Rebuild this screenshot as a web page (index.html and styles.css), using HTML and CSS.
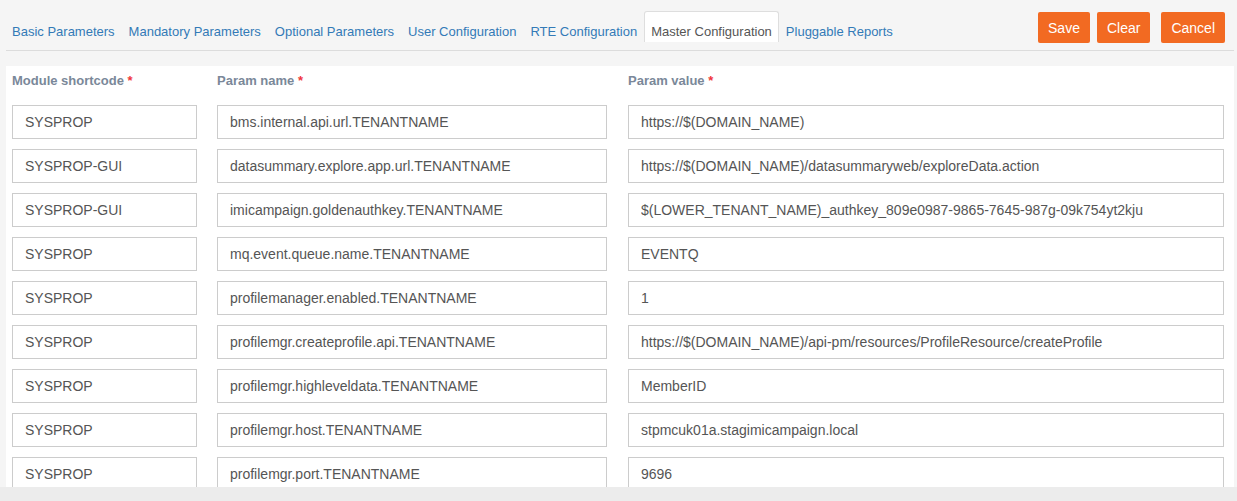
FILE: index.html
```html
<!DOCTYPE html>
<html>
<head>
<meta charset="utf-8">
<link rel="stylesheet" href="styles.css">
</head>
<body>
<div class="header">
  <ul class="tabs">
    <li class="tab"><a>Basic Parameters</a></li>
    <li class="tab"><a>Mandatory Parameters</a></li>
    <li class="tab"><a>Optional Parameters</a></li>
    <li class="tab"><a>User Configuration</a></li>
    <li class="tab"><a>RTE Configuration</a></li>
    <li class="tab active"><a>Master Configuration</a></li>
    <li class="tab"><a>Pluggable Reports</a></li>
  </ul>
  <div class="actions">
    <button class="btn">Save</button>
    <button class="btn">Clear</button>
    <button class="btn btn-cancel">Cancel</button>
  </div>
</div>
<div class="panel">
  <div class="grid">
    <label class="lbl">Module shortcode <span class="req">*</span></label>
    <label class="lbl">Param name <span class="req">*</span></label>
    <label class="lbl">Param value <span class="req">*</span></label>

    <input class="field" value="SYSPROP" readonly>
    <input class="field" value="bms.internal.api.url.TENANTNAME" readonly>
    <input class="field" value="https://$(DOMAIN_NAME)" readonly>

    <input class="field" value="SYSPROP-GUI" readonly>
    <input class="field" value="datasummary.explore.app.url.TENANTNAME" readonly>
    <input class="field" value="https://$(DOMAIN_NAME)/datasummaryweb/exploreData.action" readonly>

    <input class="field" value="SYSPROP-GUI" readonly>
    <input class="field" value="imicampaign.goldenauthkey.TENANTNAME" readonly>
    <input class="field" value="$(LOWER_TENANT_NAME)_authkey_809e0987-9865-7645-987g-09k754yt2kju" readonly>

    <input class="field" value="SYSPROP" readonly>
    <input class="field" value="mq.event.queue.name.TENANTNAME" readonly>
    <input class="field" value="EVENTQ" readonly>

    <input class="field" value="SYSPROP" readonly>
    <input class="field" value="profilemanager.enabled.TENANTNAME" readonly>
    <input class="field" value="1" readonly>

    <input class="field" value="SYSPROP" readonly>
    <input class="field" value="profilemgr.createprofile.api.TENANTNAME" readonly>
    <input class="field" value="https://$(DOMAIN_NAME)/api-pm/resources/ProfileResource/createProfile" readonly>

    <input class="field" value="SYSPROP" readonly>
    <input class="field" value="profilemgr.highleveldata.TENANTNAME" readonly>
    <input class="field" value="MemberID" readonly>

    <input class="field" value="SYSPROP" readonly>
    <input class="field" value="profilemgr.host.TENANTNAME" readonly>
    <input class="field" value="stpmcuk01a.stagimicampaign.local" readonly>

    <input class="field" value="SYSPROP" readonly>
    <input class="field" value="profilemgr.port.TENANTNAME" readonly>
    <input class="field" value="9696" readonly>
  </div>
</div>
<div class="footer"></div>
</body>
</html>
```
FILE: styles.css
```css
html, body {
  margin: 0;
  padding: 0;
}
body {
  background: #f5f5f5;
  font-family: "Liberation Sans", Arial, sans-serif;
  font-size: 13px;
  overflow: hidden;
  height: 501px;
}
.header {
  margin: 0 3px 0 6px;
  height: 50px;
  border-bottom: 1px solid #dcdcdc;
  display: flex;
  justify-content: space-between;
  align-items: flex-start;
}
.tabs {
  list-style: none;
  margin: 11px 0 0 -1px;
  padding: 0;
  display: flex;
}
.tab a {
  display: block;
  padding: 12px 6px 2px;
  line-height: 16px;
  color: #337ab7;
  border: 1px solid transparent;
  border-bottom: none;
  border-radius: 3px 3px 0 0;
}
.tab.active a {
  background: #fff;
  border-color: #dedede;
  color: #555;
}
.actions {
  display: flex;
  margin-top: 12px;
  margin-right: 9px;
}
.btn {
  font-family: "Liberation Sans", Arial, sans-serif;
  font-size: 14px;
  color: #fff;
  background: #f26a22;
  border: none;
  border-radius: 2px;
  height: 31px;
  padding: 0 10px;
  margin-left: 7px;
}
.btn-cancel {
  margin-left: 11px;
}
.panel {
  margin: 15px 3px 0 6px;
  background: #fff;
  padding: 7px 0 0 6px;
  height: 500px;
}
.grid {
  display: grid;
  grid-template-columns: 185px 390px 596px;
  column-gap: 20px;
  row-gap: 10px;
}
.grid > :nth-child(3n) {
  margin-left: 1px;
}
.lbl {
  font-weight: bold;
  font-size: 13px;
  line-height: 16px;
  color: #7a8899;
  margin-bottom: 6px;
}
.req {
  color: #f0363b;
}
.field {
  box-sizing: border-box;
  height: 34px;
  border: 1px solid #cccccc;
  padding: 0 12px;
  font-family: "Liberation Sans", Arial, sans-serif;
  font-size: 14px;
  color: #555;
  background: #fff;
  outline: none;
  width: 100%;
  margin: 0;
}
.footer {
  position: fixed;
  left: 0;
  right: 0;
  bottom: 0;
  height: 14px;
  background: #ececec;
}
```
